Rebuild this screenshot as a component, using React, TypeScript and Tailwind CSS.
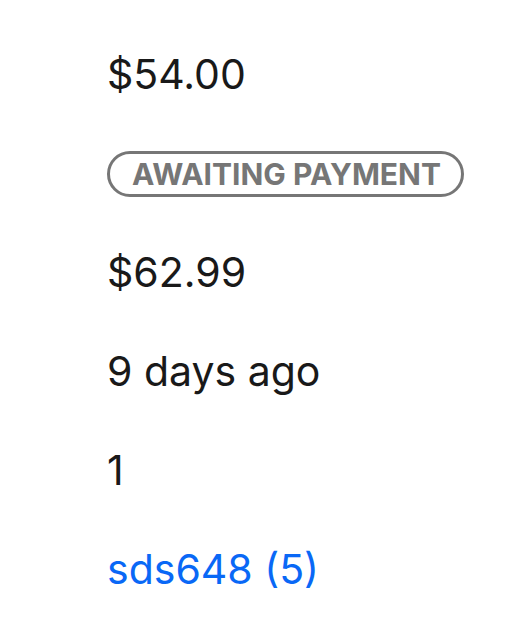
export default function App() {
  return (
    <div className="w-[527px] h-[619px] bg-white pl-[107px] pt-[52px] text-[#191919]" style={{ fontFamily: 'Inter, "Noto Sans", sans-serif' }}>
      <div className="flex flex-col">
        <div className="h-[46px] flex items-center text-[41px]">$54.00</div>
        <div className="mt-[53px] h-[46px] w-fit flex items-center rounded-full border-[3px] border-[#767676] pl-[22px] pr-[20px] text-[30px] font-bold text-[#767676]">
          AWAITING PAYMENT
        </div>
        <div className="mt-[53px] h-[46px] flex items-center text-[41px]">$62.99</div>
        <div className="mt-[53px] h-[46px] flex items-center text-[41px]">9 days ago</div>
        <div className="mt-[53px] h-[46px] flex items-center text-[41px]">1</div>
        <div className="mt-[53px] h-[46px] flex items-center text-[41px] text-[#0968f6]">sds648 (5)</div>
      </div>
    </div>
  );
}
